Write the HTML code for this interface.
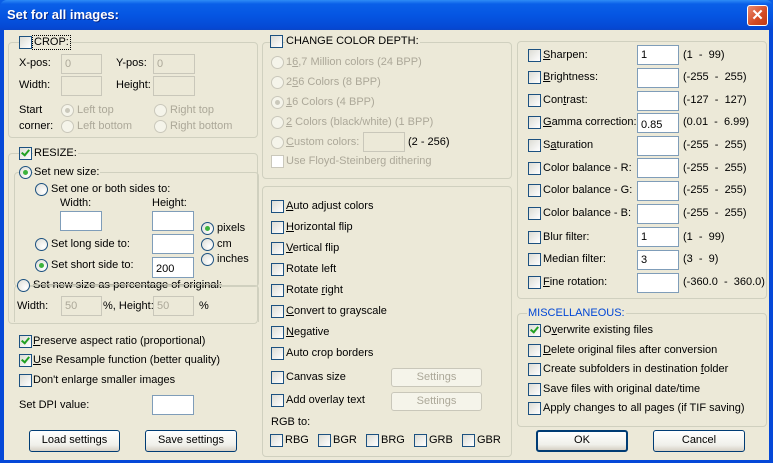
<!DOCTYPE html><html><head><style>
body{margin:0;width:773px;height:463px;overflow:hidden;background:#0a4fd6;font-family:"Liberation Sans",sans-serif;font-size:11px}
#win{position:absolute;left:0;top:0;width:773px;height:463px;background:linear-gradient(#0a5ee6,#0548d8 30px);}
#tb{position:absolute;left:0;top:0;width:773px;height:30px;border-radius:7px 7px 0 0;background:linear-gradient(#2f8cf6,#0a5fe8 4px,#0556e3 15px,#0548d3 28px,#0a45c6)}
#ttl{position:absolute;left:7px;top:7px;color:#fff;font:bold 13px "Liberation Sans",sans-serif;text-shadow:1px 1px #0b2a8a}
#cls{position:absolute;left:747px;top:5px;width:19px;height:19px;border:1px solid #fff;border-radius:3px;background:linear-gradient(135deg,#e98a70,#d44a22 60%,#c13b14);color:#fff;font:bold 15px "Liberation Sans";text-align:center;line-height:19px}
#body{position:absolute;left:4px;top:30px;width:765px;height:430px;background:#ece9d8}
.a{position:absolute}
.t{position:absolute;white-space:nowrap;line-height:13px;color:#000}
.g{color:#aca899}
.gb{position:absolute;border:1px solid #d0d0bf;border-radius:4px}
.cb{position:absolute;width:11px;height:11px;border:1px solid #1c5180;background:linear-gradient(135deg,#dcdcd5,#fff)}
.cb.d{border-color:#cac8bb;background:#fff}
.ck::after{content:"";position:absolute;left:3px;top:0px;width:3px;height:6px;border:solid #21a121;border-width:0 2px 2px 0;transform:rotate(40deg)}
.rb{position:absolute;width:11px;height:11px;border:1px solid #1c5180;border-radius:50%;background:radial-gradient(circle at 70% 70%,#fff,#dcdcd5)}
.rb.d{border-color:#cac8bb;background:#f5f4ea}
.rs::after{content:"";position:absolute;left:3px;top:3px;width:5px;height:5px;border-radius:50%;background:#3db33d}
.rb.d.rs::after{background:#cac8bb}
.in{position:absolute;border:1px solid #7f9db9;background:#fff;height:18px;box-sizing:border-box;width:42px;padding:3px 3px;line-height:12px}
.in.d{background:#ece9d8;border-color:#c9c7ba;color:#aca899}
.bt{position:absolute;box-sizing:border-box;border:1px solid #003c74;border-radius:3px;background:linear-gradient(#fff,#f0f0ea 70%,#d6d0c5);text-align:center;line-height:19px;height:22px}
.bt.d{border-color:#c9c7ba;color:#aca899;background:#f5f4ea;height:19px;line-height:17px}
.lbl{background:#ece9d8;padding:0 1px}
u{text-decoration:underline}
</style></head><body>
<div id="win"><div id="tb"></div><div id="ttl">Set for all images:</div><div id="cls">✕</div></div>
<div id="body"></div>

<!-- CROP -->
<div class="gb" style="left:8px;top:42px;width:248px;height:94px"></div>
<div class="cb" style="left:19px;top:36px"></div><div class="t lbl" style="left:33px;top:36px;outline:1px dotted #000">CROP:</div>
<div class="t" style="left:19px;top:57px">X-pos:</div><div class="in d" style="left:61px;top:54px;height:20px;width:41px">0</div>
<div class="t" style="left:116px;top:57px">Y-pos:</div><div class="in d" style="left:153px;top:54px;height:20px;width:42px">0</div>
<div class="t" style="left:19px;top:79px">Width:</div><div class="in d" style="left:61px;top:76px;height:20px;width:41px"></div>
<div class="t" style="left:116px;top:79px">Height:</div><div class="in d" style="left:153px;top:76px;height:20px;width:42px"></div>
<div class="t" style="left:19px;top:104px">Start</div><div class="t" style="left:19px;top:120px">corner:</div>
<div class="rb d rs" style="left:61px;top:104px"></div><div class="t g" style="left:77px;top:104px">Left top</div>
<div class="rb d" style="left:61px;top:120px"></div><div class="t g" style="left:77px;top:120px">Left bottom</div>
<div class="rb d" style="left:154px;top:104px"></div><div class="t g" style="left:170px;top:104px">Right top</div>
<div class="rb d" style="left:154px;top:120px"></div><div class="t g" style="left:170px;top:120px">Right bottom</div>

<!-- RESIZE -->
<div class="gb" style="left:8px;top:153px;width:248px;height:169px"></div>
<div class="gb" style="left:14px;top:172px;width:243px;height:113px"></div>
<div class="gb" style="left:14px;top:285px;width:243px;height:36px;border-bottom:none;border-radius:4px 4px 0 0"></div>
<div class="cb ck" style="left:19px;top:147px"></div><div class="t lbl" style="left:33px;top:147px">RESIZE:</div>
<div class="rb rs" style="left:19px;top:166px"></div><div class="t lbl" style="left:33px;top:166px">Set new size:</div>
<div class="rb" style="left:35px;top:183px"></div><div class="t" style="left:51px;top:183px">Set one or both sides to:</div>
<div class="t" style="left:60px;top:197px">Width:</div><div class="t" style="left:152px;top:197px">Height:</div>
<div class="in" style="left:60px;top:211px;height:20px">&nbsp;</div><div class="in" style="left:152px;top:211px;height:20px"></div>
<div class="rb rs" style="left:201px;top:222px"></div><div class="t" style="left:217px;top:222px">pixels</div>
<div class="rb" style="left:201px;top:238px"></div><div class="t" style="left:217px;top:238px">cm</div>
<div class="rb" style="left:201px;top:253px"></div><div class="t" style="left:217px;top:253px">inches</div>
<div class="rb" style="left:35px;top:238px"></div><div class="t" style="left:51px;top:238px">Set long side to:</div><div class="in" style="left:152px;top:234px;height:20px"></div>
<div class="rb rs" style="left:35px;top:259px"></div><div class="t" style="left:51px;top:259px">Set short side to:</div><div class="in" style="left:152px;top:257px;height:21px;padding-top:5px">200</div>
<div class="rb" style="left:17px;top:279px"></div><div class="t" style="left:33px;top:279px;text-decoration:line-through;text-decoration-color:#b8b6a6">Set new size as percentage of original:</div>
<div class="t" style="left:17px;top:300px">Width:</div><div class="in d" style="left:61px;top:296px;height:20px;width:41px">50</div>
<div class="t" style="left:103px;top:300px">%, Height:</div><div class="in d" style="left:153px;top:296px;height:20px;width:41px">50</div><div class="t" style="left:199px;top:300px">%</div>

<div class="cb ck" style="left:19px;top:335px"></div><div class="t" style="left:33px;top:335px"><u>P</u>reserve aspect ratio (proportional)</div>
<div class="cb ck" style="left:19px;top:354px"></div><div class="t" style="left:33px;top:354px"><u>U</u>se Resample function (better quality)</div>
<div class="cb" style="left:19px;top:374px"></div><div class="t" style="left:33px;top:374px">Don't enlarge smaller images</div>
<div class="t" style="left:19px;top:399px">Set DPI value:</div><div class="in" style="left:152px;top:395px;height:20px"></div>
<div class="bt" style="left:29px;top:430px;width:91px">Load settings</div>
<div class="bt" style="left:145px;top:430px;width:92px">Save settings</div>

<!-- COLOR DEPTH -->
<div class="gb" style="left:262px;top:42px;width:248px;height:135px"></div>
<div class="cb" style="left:270px;top:35px"></div><div class="t lbl" style="left:285px;top:35px">CHANGE COLOR DEPTH:</div>
<div class="rb d" style="left:271px;top:56px"></div><div class="t g" style="left:286px;top:56px">1<u>6</u>,7 Million colors (24 BPP)</div>
<div class="rb d" style="left:271px;top:76px"></div><div class="t g" style="left:286px;top:76px">2<u>5</u>6 Colors (8 BPP)</div>
<div class="rb d rs" style="left:271px;top:96px"></div><div class="t g" style="left:286px;top:96px"><u>1</u>6 Colors (4 BPP)</div>
<div class="rb d" style="left:271px;top:116px"></div><div class="t g" style="left:286px;top:116px"><u>2</u> Colors (black/white) (1 BPP)</div>
<div class="rb d" style="left:271px;top:136px"></div><div class="t g" style="left:286px;top:136px"><u>C</u>ustom colors:</div>
<div class="in d" style="left:363px;top:132px;width:42px;height:20px"></div><div class="t" style="left:408px;top:136px">(2 - 256)</div>
<div class="cb d" style="left:271px;top:155px"></div><div class="t g" style="left:286px;top:155px">Use Floyd-Steinberg dithering</div>

<!-- transforms -->
<div class="gb" style="left:262px;top:186px;width:248px;height:269px"></div>
<div class="cb" style="left:271px;top:200px"></div><div class="t" style="left:286px;top:200px"><u>A</u>uto adjust colors</div>
<div class="cb" style="left:271px;top:221px"></div><div class="t" style="left:286px;top:221px"><u>H</u>orizontal flip</div>
<div class="cb" style="left:271px;top:242px"></div><div class="t" style="left:286px;top:242px"><u>V</u>ertical flip</div>
<div class="cb" style="left:271px;top:263px"></div><div class="t" style="left:286px;top:263px">Rotate left</div>
<div class="cb" style="left:271px;top:284px"></div><div class="t" style="left:286px;top:284px">Rotate <u>r</u>ight</div>
<div class="cb" style="left:271px;top:305px"></div><div class="t" style="left:286px;top:305px"><u>C</u>onvert to grayscale</div>
<div class="cb" style="left:271px;top:326px"></div><div class="t" style="left:286px;top:326px"><u>N</u>egative</div>
<div class="cb" style="left:271px;top:347px"></div><div class="t" style="left:286px;top:347px">Auto crop borders</div>
<div class="cb" style="left:271px;top:371px"></div><div class="t" style="left:286px;top:371px">Canvas size</div>
<div class="bt d" style="left:391px;top:368px;width:91px">Settings</div>
<div class="cb" style="left:271px;top:394px"></div><div class="t" style="left:286px;top:394px">Add overlay text</div>
<div class="bt d" style="left:391px;top:392px;width:91px">Settings</div>
<div class="t" style="left:271px;top:416px">RGB to:</div>
<div class="cb" style="left:270px;top:434px"></div><div class="t" style="left:285px;top:434px">RBG</div>
<div class="cb" style="left:318px;top:434px"></div><div class="t" style="left:333px;top:434px">BGR</div>
<div class="cb" style="left:366px;top:434px"></div><div class="t" style="left:381px;top:434px">BRG</div>
<div class="cb" style="left:414px;top:434px"></div><div class="t" style="left:429px;top:434px">GRB</div>
<div class="cb" style="left:462px;top:434px"></div><div class="t" style="left:477px;top:434px">GBR</div>

<!-- filters -->
<div class="gb" style="left:517px;top:41px;width:248px;height:256px"></div>
<div class="cb" style="left:528px;top:49px"></div><div class="t" style="left:543px;top:49px"><u>S</u>harpen:</div><div class="in" style="left:637px;top:45px;width:42px;height:20px">1</div><div class="t" style="left:683px;top:49px">(1 &nbsp;- &nbsp;99)</div>
<div class="cb" style="left:528px;top:71px"></div><div class="t" style="left:543px;top:71px"><u>B</u>rightness:</div><div class="in" style="left:637px;top:68px;height:20px"></div><div class="t" style="left:683px;top:71px">(-255 &nbsp;- &nbsp;255)</div>
<div class="cb" style="left:528px;top:94px"></div><div class="t" style="left:543px;top:94px">Con<u>t</u>rast:</div><div class="in" style="left:637px;top:91px;height:20px"></div><div class="t" style="left:683px;top:94px">(-127 &nbsp;- &nbsp;127)</div>
<div class="cb" style="left:528px;top:116px"></div><div class="t" style="left:543px;top:116px"><u>G</u>amma correction:</div><div class="in" style="left:637px;top:113px;height:20px;padding-top:5px">0.85</div><div class="t" style="left:683px;top:116px">(0.01 &nbsp;- &nbsp;6.99)</div>
<div class="cb" style="left:528px;top:139px"></div><div class="t" style="left:543px;top:139px">S<u>a</u>turation</div><div class="in" style="left:637px;top:136px;height:20px"></div><div class="t" style="left:683px;top:139px">(-255 &nbsp;- &nbsp;255)</div>
<div class="cb" style="left:528px;top:162px"></div><div class="t" style="left:543px;top:162px">Color balance - R:</div><div class="in" style="left:637px;top:158px;height:20px"></div><div class="t" style="left:683px;top:162px">(-255 &nbsp;- &nbsp;255)</div>
<div class="cb" style="left:528px;top:184px"></div><div class="t" style="left:543px;top:184px">Color balance - G:</div><div class="in" style="left:637px;top:181px;height:20px"></div><div class="t" style="left:683px;top:184px">(-255 &nbsp;- &nbsp;255)</div>
<div class="cb" style="left:528px;top:207px"></div><div class="t" style="left:543px;top:207px">Color balance - B:</div><div class="in" style="left:637px;top:204px;height:20px"></div><div class="t" style="left:683px;top:207px">(-255 &nbsp;- &nbsp;255)</div>
<div class="cb" style="left:528px;top:231px"></div><div class="t" style="left:543px;top:231px">Blur filter:</div><div class="in" style="left:637px;top:227px;height:20px">1</div><div class="t" style="left:683px;top:231px">(1 &nbsp;- &nbsp;99)</div>
<div class="cb" style="left:528px;top:253px"></div><div class="t" style="left:543px;top:253px">Median filter:</div><div class="in" style="left:637px;top:250px;height:20px">3</div><div class="t" style="left:683px;top:253px">(3 &nbsp;- &nbsp;9)</div>
<div class="cb" style="left:528px;top:276px"></div><div class="t" style="left:543px;top:276px"><u>F</u>ine rotation:</div><div class="in" style="left:637px;top:273px;height:20px"></div><div class="t" style="left:683px;top:276px">(-360.0 &nbsp;- &nbsp;360.0)</div>

<!-- misc -->
<div class="gb" style="left:517px;top:313px;width:248px;height:112px"></div>
<div class="t lbl" style="left:527px;top:307px;color:#0046d5">MISCELLANEOUS:</div>
<div class="cb ck" style="left:528px;top:324px"></div><div class="t" style="left:543px;top:324px">O<u>v</u>erwrite existing files</div>
<div class="cb" style="left:528px;top:344px"></div><div class="t" style="left:543px;top:344px"><u>D</u>elete original files after conversion</div>
<div class="cb" style="left:528px;top:363px"></div><div class="t" style="left:543px;top:363px">Create subfolders in destination <u>f</u>older</div>
<div class="cb" style="left:528px;top:383px"></div><div class="t" style="left:543px;top:383px">Save files with original date/time</div>
<div class="cb" style="left:528px;top:402px"></div><div class="t" style="left:543px;top:402px">Apply changes to all pages (if TIF saving)</div>
<div class="bt" style="left:536px;top:430px;width:92px;border-width:2px;line-height:17px">OK</div>
<div class="bt" style="left:653px;top:430px;width:92px">Cancel</div>
</body></html>
